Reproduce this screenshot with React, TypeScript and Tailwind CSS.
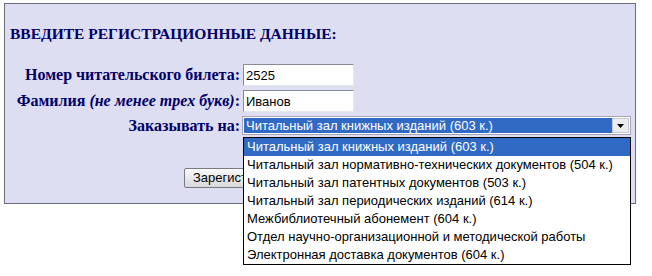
import React from 'react';

const serif = "font-['Liberation_Serif','Times_New_Roman',serif]";
const sans = "font-['Liberation_Sans',Arial,sans-serif]";

const options = [
  'Читальный зал книжных изданий (603 к.)',
  'Читальный зал нормативно-технических документов (504 к.)',
  'Читальный зал патентных документов (503 к.)',
  'Читальный зал периодических изданий (614 к.)',
  'Межбиблиотечный абонемент (604 к.)',
  'Отдел научно-организационной и методической работы',
  'Электронная доставка документов (604 к.)',
];

export default function App() {
  return (
    <div className="relative w-[652px] h-[276px] bg-white pt-[3px] pl-[4px] overflow-hidden">
      <div className="w-[632px] h-[201px] bg-[#dedef2] border border-[#6c6c7c]">
        {/* heading */}
        <div className={`${serif} pt-[20px] pl-[5px] h-[60px] text-[15.5px] leading-[20px] font-bold text-[#000066]`}>
          ВВЕДИТЕ РЕГИСТРАЦИОННЫЕ ДАННЫЕ:
        </div>

        <div className="grid grid-cols-[235px_auto] gap-x-[3px] gap-y-[4px] items-center">
          <label className={`${serif} text-right text-[16px] leading-[18px] font-bold text-[#000066]`}>Номер читательского билета:</label>
          <input
            defaultValue="2525"
            className={`${sans} w-[111px] h-[22px] bg-white border border-t-[#8a8a94] border-l-[#8a8a94] border-r-[#e6e6ee] border-b-[#e6e6ee] px-[2px] text-[13px] text-black outline-none`}
          />

          <label className={`${serif} text-right text-[16px] leading-[18px] font-bold text-[#000066]`}>
            Фамилия <i>(не менее трех букв)</i>:
          </label>
          <input
            defaultValue="Иванов"
            className={`${sans} w-[111px] h-[22px] bg-white border border-t-[#8a8a94] border-l-[#8a8a94] border-r-[#e6e6ee] border-b-[#e6e6ee] px-[2px] text-[13px] text-black outline-none`}
          />

          <label className={`${serif} text-right text-[16px] leading-[18px] font-bold text-[#000066]`}>Заказывать на:</label>
          <div className="relative -ml-[1px] w-[389px] h-[19px] bg-white border border-[#a4a4b4] flex items-center p-[1px]">
            <div className={`${sans} flex-1 h-full bg-[#316ac5] text-white text-[13px] leading-[15px] pl-[2px]`}>
              {options[0]}
            </div>
            <div className="w-[17px] h-full bg-[#ebebf0] border border-[#c8c8d4] flex items-center justify-center">
              <svg width="7" height="4" viewBox="0 0 7 4"><path d="M0 0h7L3.5 4z" fill="#000" /></svg>
            </div>
          </div>
        </div>

        <div className="pl-[179px] pt-[29px]">
          <button className={`${sans} h-[20px] px-[8px] text-[13px] leading-[16px] text-black bg-gradient-to-b from-[#fafafa] to-[#d8d8dc] border border-[#7a7a84] rounded-[2px]`}>
            Зарегистрироваться
          </button>
        </div>
      </div>

      {/* open dropdown list */}
      <ul className={`${sans} absolute left-[243px] top-[137px] w-[388px] bg-white border border-black text-[13px] text-black`}>
        {options.map((o, i) => (
          <li
            key={o}
            className={`h-[18px] leading-[18px] pl-[3px] whitespace-nowrap ${i === 0 ? 'bg-[#316ac5] text-white' : ''}`}
          >
            {o}
          </li>
        ))}
      </ul>
    </div>
  );
}
